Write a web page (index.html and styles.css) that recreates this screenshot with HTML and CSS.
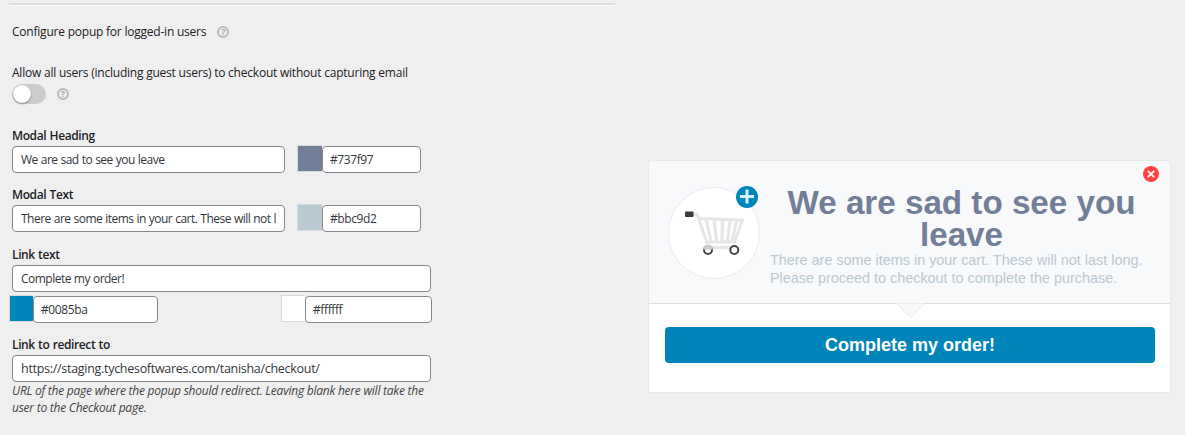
FILE: index.html
```html
<!doctype html>
<html lang="en">
<head>
	<meta charset="UTF-8">
	<title>Popup settings</title>
	<link rel="stylesheet" href="styles.css">
</head>
<body>
	<form class="settings">
		<div class="row row--inline">
			<span class="label">Configure popup for logged-in users</span>
			<span class="help">?</span>
		</div>

		<div class="row row--guest">
			<span class="label">Allow all users (including guest users) to checkout without capturing email</span>
			<div class="toggle-line">
				<span class="toggle"></span>
				<span class="help">?</span>
			</div>
		</div>

		<div class="row row--heading">
			<label class="label" for="heading">Modal Heading</label>
			<div class="fields">
				<input class="input input--text" id="heading" type="text" value="We are sad to see you leave">
				<div class="color">
					<span class="swatch swatch--heading"></span>
					<input class="input input--color" type="text" value="#737f97">
				</div>
			</div>
		</div>

		<div class="row row--text">
			<label class="label" for="text">Modal Text</label>
			<div class="fields">
				<input class="input input--text" id="text" type="text" value="There are some items in your cart. These will not last long. Please proceed to checkout to complete the purchase.">
				<div class="color">
					<span class="swatch swatch--text"></span>
					<input class="input input--color" type="text" value="#bbc9d2">
				</div>
			</div>
		</div>

		<div class="row row--link">
			<label class="label" for="link">Link text</label>
			<input class="input input--wide" id="link" type="text" value="Complete my order!">
			<div class="link-colors">
				<div class="color">
					<span class="swatch swatch--button"></span>
					<input class="input input--button" type="text" value="#0085ba">
				</div>
				<div class="color">
					<span class="swatch swatch--white"></span>
					<input class="input input--white" type="text" value="#ffffff">
				</div>
			</div>
		</div>

		<div class="row row--redirect">
			<label class="label" for="redirect">Link to redirect to</label>
			<input class="input input--wide input--url" id="redirect" type="text" value="https://staging.tychesoftwares.com/tanisha/checkout/">
			<p class="description">URL of the page where the popup should redirect. Leaving blank here will take the<br>user to the Checkout page.</p>
		</div>
	</form>

	<div class="popup">
		<div class="popup__head">
			<svg class="popup__close" width="16" height="16" viewBox="0 0 16 16">
				<circle cx="8" cy="8" r="8" fill="#ff4343"/>
				<path d="M4.800 4.800l6.400 6.400M11.200 4.800l-6.400 6.400" stroke="#fff" stroke-width="1.700"/>
			</svg>
			<div class="popup__icon">
				<svg width="90" height="90" viewBox="0 0 90 90" fill="none">
					<path d="M24 26.300h4l10.500 30M29 30.500l44.500 1.500-8 22H37.500" stroke="#e6e6e6" stroke-width="3" stroke-linejoin="round"/>
					<path d="M37 31l5 22M45 31l2.500 22M53.500 31l-.5 22M61.500 31l-3 22M68 31l-5 22" stroke="#e6e6e6" stroke-width="3.200"/>
					<path d="M38 59.500h28" stroke="#e6e6e6" stroke-width="3.500"/>
					<rect x="16" y="23.500" width="8.500" height="5.500" rx="1" fill="#3b3b3b"/>
					<circle cx="39" cy="62" r="4" stroke="#444" stroke-width="2"/>
					<path d="M34.200 61.600a4.800 4.800 0 0 1 9.600 0z" fill="#ccc"/>
					<circle cx="65.300" cy="62" r="4" fill="#fff" stroke="#444" stroke-width="2"/>
				</svg>
				<svg class="popup__plus" width="22" height="22" viewBox="0 0 22 22">
					<circle cx="11" cy="11" r="11" fill="#0085ba"/>
					<path d="M4 10.500h14M11 3.500v14" stroke="#d9f1fb" stroke-width="3"/>
				</svg>
			</div>
			<div class="popup__copy">
				<h2 class="popup__title">We are sad to see you leave</h2>
				<p class="popup__text">There are some items in your cart. These will not last long. Please proceed to checkout to complete the purchase.</p>
			</div>
		</div>
		<div class="popup__foot">
			<button class="popup__button" type="button">Complete my order!</button>
		</div>
	</div>
</body>
</html>
```
FILE: styles.css
```css
* {
  box-sizing: border-box;
}

body {
  background-color: #efefef;
  color: #1d2126;
  display: flex;
  align-items: flex-start;
  font-family: "Open Sans", "Noto Sans", sans-serif;
  font-size: 12px;
  height: 435px;
  margin: 0;
  overflow: hidden;
  padding: 3px 0 0 9px;
}

.settings {
  border-top: 2px solid #dcdcdc;
  box-shadow: inset 0 1px 0 #fafafa;
  padding: 19px 0 0 3px;
  width: 606px;
}

.row {
  display: flex;
  flex-direction: column;
}

.row--inline {
  align-items: center;
  flex-direction: row;
  gap: 11px;
  height: 16px;
}

.row--guest {
  margin-top: 25px;
}

.row--heading {
  margin-top: 22px;
}

.row--text {
  margin-top: 12px;
}

.row--link {
  margin-top: 13px;
}

.row--redirect {
  margin-top: 12px;
}

.label {
  font-weight: 500;
  height: 16px;
  letter-spacing: -0.22px;
  line-height: 16px;
  white-space: nowrap;
}

.row > label {
  font-weight: 600;
  height: 20px;
  letter-spacing: -0.38px;
  line-height: 19px;
  word-spacing: 0.5px;
}

.help {
  border: 2px solid #b9b9b9;
  border-radius: 50%;
  color: #aaa;
  font-size: 9px;
  font-weight: 700;
  height: 12px;
  line-height: 8px;
  text-align: center;
  width: 12px;
}

.toggle-line {
  align-items: center;
  display: flex;
  gap: 11px;
  height: 20px;
  margin-top: 3px;
}

.toggle {
  background-color: #ccc;
  border-radius: 10px;
  height: 20px;
  padding: 1px;
  width: 34px;
}

.toggle::before {
  background-color: #fff;
  border-radius: 50%;
  box-shadow: 0 1px 2px rgba(0, 0, 0, 0.4);
  content: "";
  display: block;
  height: 18px;
  width: 18px;
}

.fields {
  display: flex;
  gap: 12px;
}

.input {
  background-color: #fff;
  border: 1px solid #85878d;
  border-radius: 4px;
  color: #32373c;
  font-family: inherit;
  font-size: 12px;
  height: 27px;
  letter-spacing: -0.52px;
  margin: 0;
  outline: 0;
  padding: 0 8px;
  word-spacing: 0.4px;
}

.input--text {
  width: 273px;
}

.input--color {
  width: 99px;
}

.input--wide {
  width: 419px;
}

.input--url {
  font-size: 12.5px;
  letter-spacing: -0.29px;
}

.input--button {
  width: 125px;
}

.input--white {
  width: 127px;
}

.color {
  display: flex;
}

.color .input {
  letter-spacing: -0.4px;
  padding: 0 7px;
}

.swatch {
  border: 1px solid #d5dade;
  border-right: 0;
  height: 27px;
  margin-top: -1px;
  width: 25px;
}

.swatch--heading {
  background-color: #737f97;
}

.swatch--text {
  background-color: #bbc9d2;
}

.swatch--button {
  background-color: #0085ba;
  width: 24px;
}

.swatch--white {
  background-color: #fff;
  width: 24px;
}

.link-colors {
  display: flex;
  justify-content: space-between;
  margin: 4px 0 0 -3px;
  width: 423px;
}

.description {
  color: #444;
  font-style: italic;
  letter-spacing: -0.24px;
  line-height: 17px;
  margin: 0;
  white-space: nowrap;
}

.popup {
  background-color: #fff;
  border: 1px solid #e8e8e8;
  border-radius: 5px 5px 0 0;
  font-family: "Liberation Sans", Arial, sans-serif;
  height: 233px;
  margin: 157px 0 0 33px;
  width: 523px;
}

.popup__head {
  background-color: #f8f9fb;
  border-bottom: 1px solid #dcdcdc;
  border-radius: 4px 4px 0 0;
  display: flex;
  height: 143px;
  padding: 26px 17px 0 19px;
  position: relative;
}

.popup__head::after {
  background-color: #f8f9fb;
  border: solid #e6e7e9;
  border-width: 0 1px 1px 0;
  bottom: -11px;
  clip-path: polygon(100% 0, 100% 100%, 0 100%);
  content: "";
  height: 20px;
  left: 251px;
  position: absolute;
  transform: rotate(45deg);
  width: 20px;
}

.popup__close {
  position: absolute;
  right: 11px;
  top: 5px;
}

.popup__icon {
  background-color: #fff;
  border: 1px solid #e9ebf2;
  border-radius: 50%;
  flex: none;
  height: 92px;
  position: relative;
  width: 92px;
}

.popup__plus {
  position: absolute;
  right: 1px;
  top: -2px;
}

.popup__copy {
  margin-left: 10px;
  width: 384px;
}

.popup__title {
  color: #737f97;
  font-size: 33.2px;
  line-height: 32px;
  margin: 0;
  text-align: center;
}

.popup__text {
  color: #bbc9d2;
  font-size: 14.4px;
  line-height: 18px;
  margin: 0;
}

.popup__foot {
  padding: 23px 15px 0 16px;
}

.popup__button {
  background-color: #0085ba;
  border: 0;
  border-radius: 4px;
  color: #fff;
  font-family: inherit;
  font-size: 18px;
  font-weight: 700;
  height: 36px;
  padding: 0;
  width: 100%;
}
```
